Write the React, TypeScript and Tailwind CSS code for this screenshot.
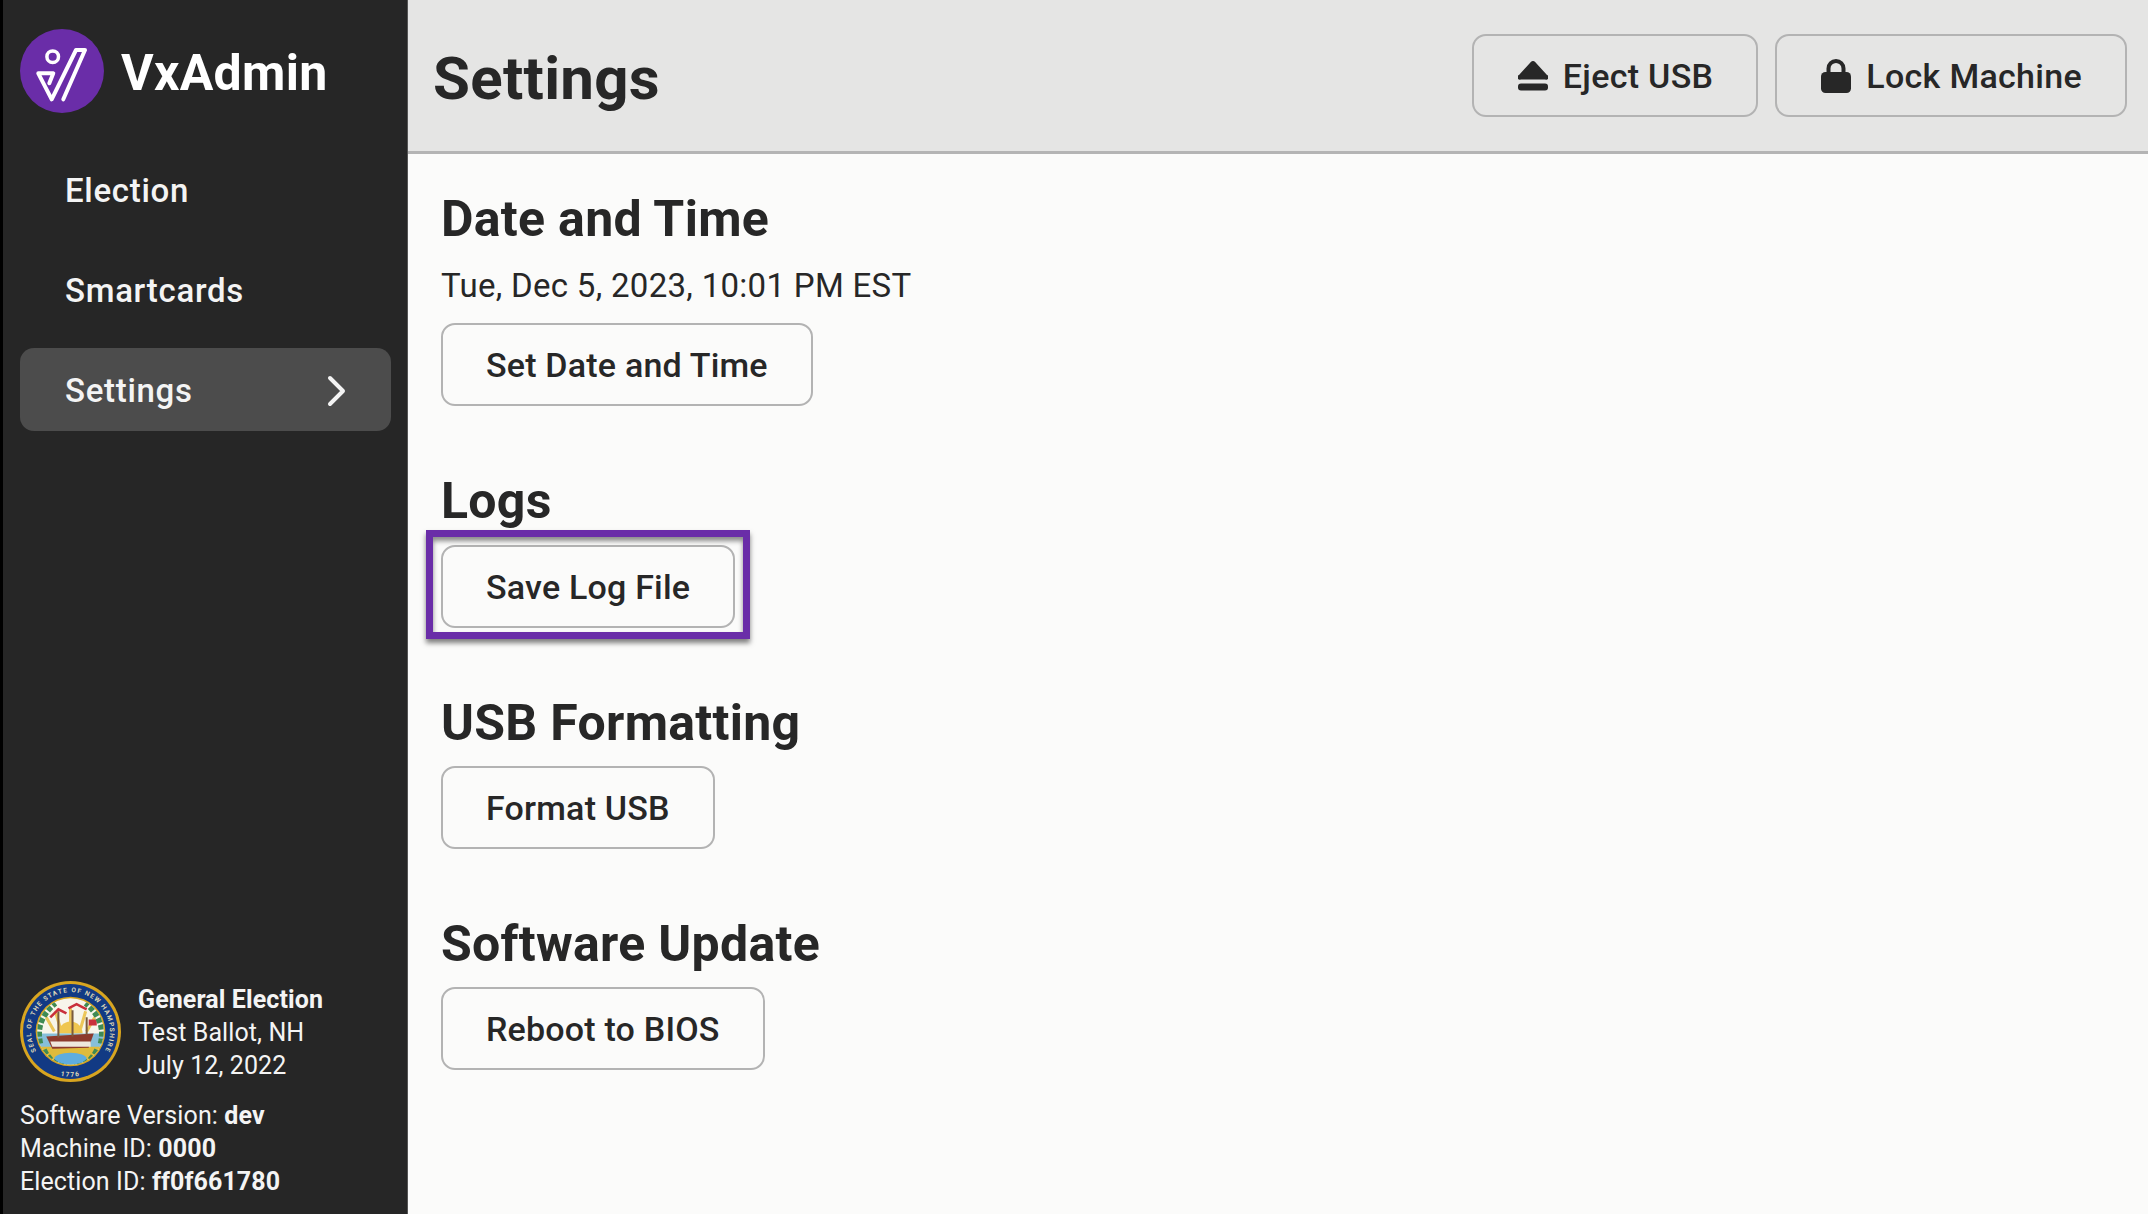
const buttonClass =
  "h-[83px] flex items-center rounded-[14px] border-2 border-[#b3b3b3] text-[34px] font-medium text-[#272727] pt-[1px] tracking-[0.2px]";
const pageButton = `${buttonClass} px-[43px]`;
const headerButton = `${buttonClass} gap-[15px] pl-[44px] pr-[43px] tracking-[0.3px]`;

function Logo() {
  return (
    <svg viewBox="0 0 84 84" className="w-[84px] h-[84px] shrink-0">
      <circle cx="42" cy="42" r="42" fill="#6a2da8" />
      <circle cx="32.700" cy="27.700" r="5.800" fill="none" stroke="#fff" strokeWidth="3.500" />
      <path
        d="M29.300 54.300 L33.300 44.300 L18.300 44.300 L31.700 70.300 L56 21 L65 21 L43.300 70.300"
        fill="none"
        stroke="#fff"
        strokeWidth="4"
        strokeLinejoin="round"
        strokeLinecap="round"
      />
    </svg>
  );
}

function Seal() {
  return (
    <svg viewBox="0 0 100 100" className="w-[101px] h-[101px] shrink-0">
      <defs>
        <path id="sealTop" d="M27.600 82 A39 39 0 1 1 72.400 82" />
        <path id="sealBottom" d="M22 85 A45 45 0 0 0 78 85" />
        <clipPath id="sealInner">
          <circle cx="50" cy="50" r="33" />
        </clipPath>
      </defs>
      <circle cx="50" cy="50" r="50" fill="#d8a520" />
      <circle cx="50" cy="50" r="47" fill="#123a84" />
      <circle cx="50" cy="50" r="34.500" fill="#d8a520" />
      <circle cx="50" cy="50" r="33" fill="#f7f5ea" />
      <g clipPath="url(#sealInner)">
        <path d="M34 50 L26 36 M40 47 L35 30 M50 46 V27 M60 47 L65 30 M66 50 L74 36" stroke="#ecc65a" strokeWidth="3" />
        <path d="M38 52 a12 12 0 0 1 24 0 Z" fill="#efc650" />
        <rect x="15" y="52" width="70" height="14" fill="#86bfd9" />
        <path d="M15 65 H85 V85 H15 Z" fill="#dfbb3c" />
        <ellipse cx="50" cy="77" rx="16" ry="6" fill="#5fadde" />
        <path d="M26 55 L73 52 L68 66 L32 67 Z" fill="#8d3a2c" />
        <path d="M30 60 H70 V65 H32 Z" fill="#efe8dc" />
        <path d="M38 30 V56 M52 29 V55 M66 36 V53" stroke="#7a5b3c" strokeWidth="2" />
        <path d="M68 38 H76 V44 H68 Z" fill="#c9303b" />
        <path d="M30 36 L38 28 L46 32 M48 27 L56 23 L66 28" fill="none" stroke="#c9303b" strokeWidth="2.500" />
        <path d="M20 62 C16 46 22 32 35 22" fill="none" stroke="#3f8a53" strokeWidth="6" strokeDasharray="5 2" />
        <path d="M80 62 C84 46 78 32 65 22" fill="none" stroke="#3f8a53" strokeWidth="6" strokeDasharray="5 2" />
        <path d="M24 68 C30 80 38 84 46 85 M76 68 C70 80 62 84 54 85" fill="none" stroke="#3f8a53" strokeWidth="5" strokeDasharray="5 2" />
      </g>
      <text fontFamily="Roboto, sans-serif" fontSize="6.500" fontWeight="700" fill="#dfd8b8" letterSpacing="1.150">
        <textPath href="#sealTop" startOffset="50%" textAnchor="middle">
          SEAL OF THE STATE OF NEW HAMPSHIRE
        </textPath>
      </text>
      <text fontFamily="Roboto, sans-serif" fontSize="6.500" fontWeight="700" fill="#dfd8b8" letterSpacing="1.200">
        <textPath href="#sealBottom" startOffset="50%" textAnchor="middle">
          1776
        </textPath>
      </text>
    </svg>
  );
}

function EjectIcon() {
  return (
    <svg viewBox="0 0 30 30" className="w-[30px] h-[30px]">
      <path d="M15 0 a2.500 2.500 0 0 1 1.900 .8 L29 14 a2.400 2.400 0 0 1 -1.800 4.500 H2.800 A2.400 2.400 0 0 1 1 14 L13.100 .8 A2.500 2.500 0 0 1 15 0 Z" fill="#272727" />
      <rect x="0" y="22.500" width="30" height="7" rx="3" fill="#272727" />
    </svg>
  );
}

function LockIcon() {
  return (
    <svg viewBox="0 0 30 34" className="w-[30px] h-[34px]">
      <path d="M7.500 15 V9.500 a7.500 7.500 0 0 1 15 0 V15" fill="none" stroke="#272727" strokeWidth="4" />
      <rect x="0" y="13" width="30" height="21" rx="4.500" fill="#272727" />
    </svg>
  );
}

function Section({ title, className, children }: { title: string; className: string; children: React.ReactNode }) {
  return (
    <section className={className}>
      <h2 className="text-[50px] leading-[56px] font-bold tracking-[0.3px] text-[#272727]">{title}</h2>
      {children}
    </section>
  );
}

export default function App() {
  return (
    <div className="flex h-[1214px] w-[2148px] overflow-hidden bg-[#fbfbfa] font-['Roboto',sans-serif]">
      <aside className="flex w-[408px] shrink-0 flex-col border-l-[3px] border-r-[1px] border-l-black border-r-[#555] bg-[#262626] text-[#f4f4f4]">
        <div className="flex items-center gap-[17px] pl-[17px] pt-[29px]">
          <Logo />
          <span className="relative top-[2px] text-[50px] leading-[60px] font-bold tracking-[0.3px] text-white">VxAdmin</span>
        </div>
        <nav className="mt-[35px] flex flex-col gap-[17px] pl-[17px] pr-[16px] text-[33px] font-medium tracking-[0.7px]">
          <div className="flex h-[83px] items-center px-[45px] pt-[2px]">Election</div>
          <div className="flex h-[83px] items-center px-[45px] pt-[2px]">Smartcards</div>
          <div className="flex h-[83px] items-center justify-between rounded-[14px] bg-[#4c4c4c] pl-[45px] pr-[44px] pt-[3px]">
            Settings
            <svg viewBox="0 0 20 32" className="h-[32px] w-[20px]">
              <path d="M3 3 L16 16 L3 29" fill="none" stroke="#f4f4f4" strokeWidth="4" strokeLinecap="round" strokeLinejoin="round" />
            </svg>
          </div>
        </nav>
        <div className="mt-auto pb-[16px] pl-[17px] text-[25px] leading-[33px] tracking-[0.1px]">
          <div className="flex items-start gap-[17px]">
            <Seal />
            <div className="pt-[2px]">
              <div className="font-bold">General Election</div>
              <div>Test Ballot, NH</div>
              <div>July 12, 2022</div>
            </div>
          </div>
          <div className="mt-[17px]">
            Software Version: <b className="font-bold">dev</b>
          </div>
          <div>
            Machine ID: <b className="font-bold">0000</b>
          </div>
          <div>
            Election ID: <b className="font-bold">ff0f661780</b>
          </div>
        </div>
      </aside>
      <div className="flex min-w-0 flex-1 flex-col">
        <header className="flex h-[154px] shrink-0 items-center justify-between border-b-[3px] border-[#b4b4b4] bg-[#e5e5e4] pl-[25px] pr-[21px]">
          <h1 className="relative top-[3px] text-[60px] font-bold tracking-[0.3px] text-[#272727]">Settings</h1>
          <div className="flex gap-[17px]">
            <button className={headerButton}>
              <EjectIcon />
              Eject USB
            </button>
            <button className={headerButton}>
              <LockIcon />
              Lock Machine
            </button>
          </div>
        </header>
        <main className="flex flex-col items-start pl-[33px]">
          <Section title="Date and Time" className="mt-[37px]">
            <p className="mt-[17px] text-[33px] leading-[44px] tracking-[0.3px] text-[#272727]">Tue, Dec 5, 2023, 10:01 PM EST</p>
            <button className={`${pageButton} mt-[15px]`}>Set Date and Time</button>
          </Section>
          <Section title="Logs" className="mt-[67px]">
            <div className="relative mt-[16px] w-fit">
              <button className={pageButton}>Save Log File</button>
              <div className="pointer-events-none absolute -top-[15px] -bottom-[11px] -left-[15px] -right-[15px] border-[7px] border-[#6a2da8] shadow-[0_4px_5px_rgba(0,0,0,0.5),inset_0_4px_5px_rgba(0,0,0,0.45)]" />
            </div>
          </Section>
          <Section title="USB Formatting" className="mt-[67px]">
            <button className={`${pageButton} mt-[15px]`}>Format USB</button>
          </Section>
          <Section title="Software Update" className="mt-[67px]">
            <button className={`${pageButton} mt-[15px]`}>Reboot to BIOS</button>
          </Section>
        </main>
      </div>
    </div>
  );
}
